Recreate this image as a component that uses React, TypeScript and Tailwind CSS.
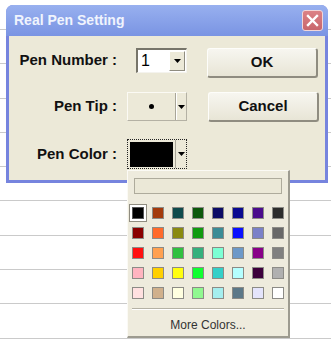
import React from "react";

const palette = [
  ["#000000", "#a33a0c", "#0f4a4c", "#0c580c", "#0c0c66", "#0a0a90", "#4a0c8c", "#2c2c2c"],
  ["#8a0000", "#ff6a2a", "#8a8a10", "#109a10", "#3a8c96", "#0a10ff", "#7a80c8", "#686868"],
  ["#ff1010", "#ffa050", "#30c040", "#34b07c", "#7cffd4", "#6c98c8", "#880088", "#808080"],
  ["#ffb4c0", "#ffd000", "#ffff10", "#10ff30", "#34d0c8", "#b4ffff", "#3c003c", "#b0b0b0"],
  ["#ffe0e0", "#d0b08c", "#ffffe0", "#90f890", "#a4eeee", "#5c7888", "#e4e4fc", "#ffffff"],
];

const Arrow = () => (
  <svg width="7" height="4" viewBox="0 0 7 4">
    <path d="M0 0h7L3.5 4z" fill="#000" />
  </svg>
);

const Label = ({ text }: { text: string }) => (
  <span className="w-[108px] text-right text-[15px] font-bold text-[#111] whitespace-nowrap">
    {text}
  </span>
);

const Button = ({ text, className }: { text: string; className?: string }) => (
  <div
    className={`w-[111px] h-[30px] flex items-center justify-center rounded-[3px] border-t border-l border-t-[#fdfdfa] border-l-[#fdfdfa] border-r-2 border-b-2 border-r-[#8f8c80] border-b-[#8f8c80] bg-gradient-to-b from-[#f7f6f0] to-[#e8e5d6] text-[15px] font-bold text-[#111] ${className ?? ""}`}
  >
    {text}
  </div>
);

export default function App() {
  return (
    <div className="relative w-[331px] h-[342px] overflow-hidden bg-white bg-[image:repeating-linear-gradient(to_bottom,transparent_0px,transparent_29px,#cacaca_29px,#cacaca_30px,transparent_30px,transparent_34.3px)] pt-[5px] pl-[6px] font-['Liberation_Sans',Arial,sans-serif]">
      {/* dialog */}
      <div className="w-[322px] h-[178px] rounded-t-[7px] bg-[#7684de] flex flex-col px-[3px] pb-[3px]">
        <div className="h-[31px] -mx-[3px] rounded-t-[7px] bg-gradient-to-b from-[#98b0ef] to-[#7a94e3] flex items-center justify-between pl-[8px] pr-[5px]">
          <span className="text-[14px] font-bold text-[#f0f4fd]">Real Pen Setting</span>
          <div className="w-[21px] h-[21px] rounded-[3px] border border-[#f1d6d8] bg-gradient-to-b from-[#dc8286] to-[#c8666c] flex items-center justify-center">
            <svg width="13" height="13" viewBox="0 0 13 13">
              <path d="M2 2l9 9M11 2l-9 9" stroke="#fff" strokeWidth="2.4" strokeLinecap="square" />
            </svg>
          </div>
        </div>

        <div className="flex-1 bg-[#ece9d8] flex">
          <div className="w-[178px] flex flex-col">
            {/* pen number */}
            <div className="mt-[12px] h-[25px] flex items-center">
              <Label text="Pen Number :" />
              <div className="ml-[19px] w-[51px] h-[25px] flex border-t-2 border-l-2 border-t-[#77756a] border-l-[#77756a] border-r border-b border-r-[#f4f3ee] border-b-[#f4f3ee] bg-white">
                <span className="flex-1 pl-[3px] text-[16px] leading-[21px] text-black">1</span>
                <div className="w-[16px] my-[1px] mr-[1px] flex items-center justify-center bg-[#ece9d8] border-t border-l border-t-white border-l-white border-r border-b border-r-[#8f8c80] border-b-[#8f8c80]">
                  <Arrow />
                </div>
              </div>
            </div>

            {/* pen tip */}
            <div className="mt-[19px] h-[29px] flex items-center">
              <Label text="Pen Tip :" />
              <div className="ml-[10px] w-[60px] h-[29px] flex items-center border-t border-l border-t-[#fbfaf4] border-l-[#fbfaf4] border-r border-b border-r-[#b4b1a4] border-b-[#b4b1a4]">
                <div className="w-[48px] h-full flex items-center justify-center border-r border-r-[#a8a598]">
                  <div className="w-[5px] h-[5px] rounded-full bg-black" />
                </div>
                <div className="flex-1 h-full flex items-center justify-center border-l border-l-white">
                  <Arrow />
                </div>
              </div>
            </div>

            {/* pen color */}
            <div className="mt-[18px] h-[30px] flex items-center">
              <Label text="Pen Color :" />
              <div className="ml-[10px] w-[60px] h-[30px] flex items-center border border-dotted border-[#222]">
                <div className="w-[48px] h-full flex items-center justify-center border-r border-r-[#a8a598]">
                  <div className="w-[43px] h-[25px] bg-black" />
                </div>
                <div className="flex-1 h-full flex items-center justify-center">
                  <Arrow />
                </div>
              </div>
            </div>
          </div>

          <div className="ml-[20px] mt-[12px] flex flex-col">
            <Button text="OK" />
            <Button text="Cancel" className="mt-[14px] ml-[1px]" />
          </div>
        </div>
      </div>

      {/* colour popup */}
      <div className="absolute left-[127px] top-[170px] w-[163px] h-[168px] flex flex-col bg-[#eeebdd] border-t border-l border-t-[#fbfaf5] border-l-[#fbfaf5] border-r-2 border-b-2 border-r-[#9d9b90] border-b-[#9d9b90]">
        <div className="mt-[7px] mx-[6px] w-[148px] h-[16px] border border-[#aeab9c] bg-[#ebe8d7]" />
        <div className="mt-[9px] grid grid-cols-[repeat(8,20px)] auto-rows-[20px]">
          {palette.flat().map((c, i) => (
            <div key={i} className="flex items-center justify-center">
              {i === 0 ? (
                <div className="w-[18px] h-[18px] flex items-center justify-center border border-[#8f8c80] bg-white">
                  <div className="w-[12px] h-[12px] border border-[#555]" style={{ backgroundColor: c }} />
                </div>
              ) : (
                <div className="w-[12px] h-[12px] border border-[#8c8b86]" style={{ backgroundColor: c }} />
              )}
            </div>
          ))}
        </div>
        <div className="mt-[5px] mx-[4px] h-px bg-[#b4b1a4] shadow-[0_1px_0_#fff]" />
        <div className="mt-[7px] text-center text-[12px] text-[#333]">More Colors...</div>
      </div>
    </div>
  );
}
